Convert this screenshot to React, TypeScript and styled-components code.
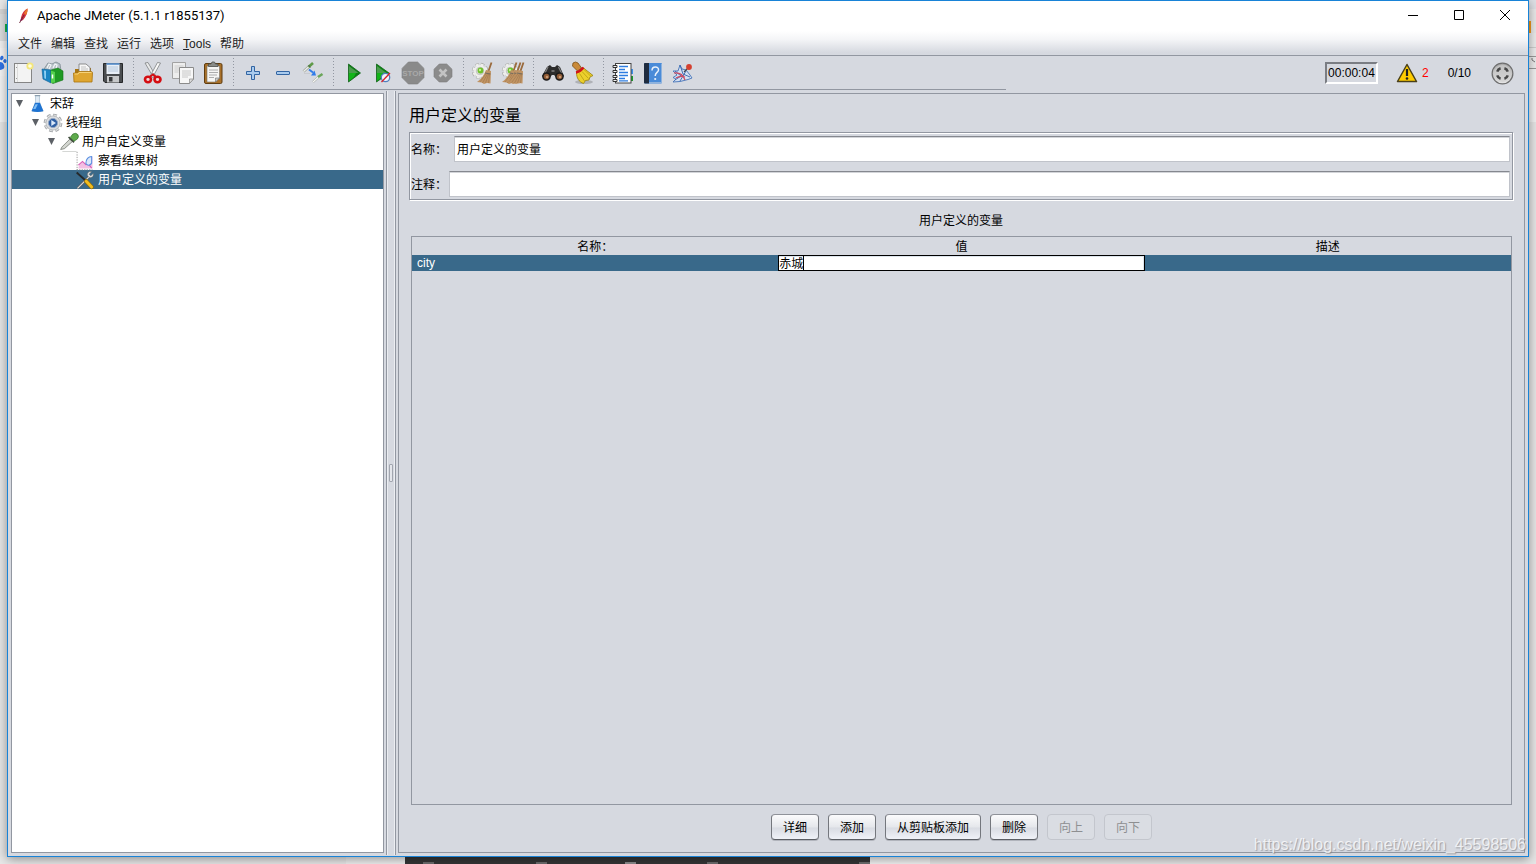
import React from "react";
import styled, { createGlobalStyle, css } from "styled-components";

const color = {
  face: "#d6d9e0",
  line: "#9297a1",
  select: "#39698a",
  accent: "#1883d7",
};

const GlobalStyle = createGlobalStyle`
  * { box-sizing: border-box; }
  body {
    margin: 0;
    background: #e6e6e6;
    color: #000;
    font: 12px/16px "Liberation Sans", "Noto Sans CJK SC", sans-serif;
  }
  button, input { font: inherit; color: inherit; }
`;

/* ---------- desktop behind the window ---------- */

const Desktop = styled.div`
  position: relative;
  display: grid;
  grid-template-columns: 7px minmax(0, 1fr) 7px;
  grid-template-rows: minmax(0, 1fr) 7px;
  height: 100vh;
  min-height: 400px;
  overflow: hidden;
`;

const Strip = styled.div`
  display: flex;
  flex-direction: column;
  overflow: hidden;
`;

const Band = styled.div<{ $h?: number; $bg: string }>`
  flex: ${(p) => (p.$h ? `0 0 ${p.$h}px` : "1")};
  display: flex;
  justify-content: flex-end;
  align-items: center;
  background: ${(p) => p.$bg};
`;

const Chip = styled.span<{ $w: number; $h: number; $bg: string; $before?: number }>`
  width: ${(p) => p.$w}px;
  height: ${(p) => p.$h}px;
  margin-left: ${(p) => p.$before ?? 0}px;
  background: ${(p) => p.$bg};
`;

const BottomStrip = styled.div`
  grid-column: 1 / -1;
  display: flex;
`;

const Slab = styled.div<{ $grow: number; $bg: string }>`
  flex: ${(p) => p.$grow} 1 0;
  display: flex;
  align-items: flex-end;
  min-width: 0;
  overflow: hidden;
  background: ${(p) => p.$bg};
`;

/* ---------- window ---------- */

const Window = styled.div`
  position: relative;
  z-index: 1;
  display: flex;
  flex-direction: column;
  min-width: 0;
  background: ${color.face};
  border: 1px solid ${color.accent};
  box-shadow: 0 2px 10px rgba(0, 0, 0, 0.4);
`;

const TitleBar = styled.header`
  display: flex;
  align-items: center;
  height: 30px;
  padding-left: 8px;
  background: #fff;
`;

const Title = styled.h1`
  flex: 1;
  margin: 0 0 0 5px;
  font: 13px/16px Roboto, "Noto Sans", sans-serif;
`;

const CaptionButton = styled.button`
  display: grid;
  place-items: center;
  width: 46px;
  height: 30px;
  padding: 0;
  border: 0;
  background: none;
`;

const MenuBar = styled.nav`
  display: flex;
  align-items: center;
  gap: 9px;
  height: 25px;
  padding-left: 10px;
  border-bottom: 1px solid ${color.line};
  background: linear-gradient(#fff, #f4f5f7 35%, #d6d9e0 90%);
`;

const MenuItem = styled.button`
  padding: 2px 0 0;
  border: 0;
  background: none;
  line-height: 16px;
  color: #222;
`;

const ToolRow = styled.div`
  display: flex;
  height: 34px;
`;

const Toolbar = styled.div`
  flex: 1;
  display: flex;
  border-bottom: 1px solid ${color.line};
`;

const ToolGroup = styled.div`
  display: flex;
  & + & {
    margin-left: 5px;
    padding-left: 5px;
    background: repeating-linear-gradient(${color.line} 0 1px, transparent 1px 3px) 0 2px / 1px 30px
      no-repeat;
  }
`;

const ToolButton = styled.button`
  display: grid;
  place-items: center;
  width: 30px;
  height: 33px;
  padding: 1px 0 0;
  border: 0;
  background: none;
`;

const Status = styled.div`
  flex: 0 0 522px;
  display: flex;
  align-items: center;
  justify-content: flex-end;
  padding-right: 14px;
`;

const Timer = styled.output`
  width: 53px;
  height: 22px;
  margin-right: 18px;
  border: 2px solid;
  border-color: #7a7d83 #fff #fff #7a7d83;
  line-height: 18px;
  text-align: center;
`;

const ErrorCount = styled.button`
  display: flex;
  align-items: center;
  gap: 4px;
  padding: 0;
  border: 0;
  background: none;
  color: #f00;
`;

const Threads = styled.span`
  margin: 0 20px 0 19px;
`;

/* ---------- split pane ---------- */

const Split = styled.main`
  flex: 1;
  display: flex;
  min-height: 0;
  padding: 0 3px;
`;

const TreePane = styled.ul`
  flex: 0 0 373px;
  margin: 3px 0;
  padding: 0;
  border: 1px solid ${color.line};
  background: #fff;
  list-style: none;
`;

const TreeRow = styled.li<{ $level: number; $selected?: boolean }>`
  display: flex;
  align-items: center;
  height: 19px;
  padding-left: ${(p) => 4 + p.$level * 16}px;
  ${(p) =>
    p.$selected &&
    css`
      background: ${color.select};
      color: #fff;
    `}
`;

const Arrow = styled.span<{ $open?: boolean }>`
  width: 7px;
  height: 7px;
  margin-right: 4px;
  ${(p) =>
    p.$open &&
    css`
      background: #5c6066;
      clip-path: polygon(0 0, 100% 0, 50% 100%);
    `}
`;

const TreeIcon = styled.span`
  display: grid;
  place-items: center;
  width: 20px;
  height: 19px;
  margin-right: 3px;
`;

const Divider = styled.div`
  flex: 0 0 10px;
  display: grid;
  place-items: center;
  margin: 1px 2px;
  border: solid ${color.line};
  border-width: 0 1px;
  box-shadow: inset 1px 0 #eceef2, inset -1px 0 #eceef2;
`;

const Grip = styled.span`
  width: 4px;
  height: 18px;
  border: 1px solid #a2a6af;
  border-radius: 1px;
  background: #e4e6eb;
`;

const Panel = styled.section`
  flex: 1;
  display: flex;
  flex-direction: column;
  min-width: 0;
  margin: 3px 0;
  padding: 12px 11px 12px 10px;
  border: 1px solid ${color.line};
`;

const PanelTitle = styled.h2`
  margin: 0 0 6px;
  font-size: 16px;
  font-weight: 400;
  line-height: 20px;
`;

const Fields = styled.div`
  display: flex;
  flex-direction: column;
  gap: 9px;
  padding: 3px 2px 2px 1px;
  border: 1px solid ${color.line};
  box-shadow: inset 1px 1px #fff, 1px 1px #fff;
`;

const Field = styled.div<{ $gap: number }>`
  display: flex;
  align-items: center;
  gap: ${(p) => p.$gap}px;
`;

const FieldLabel = styled.label`
  padding-top: 2px;
`;

const TextInput = styled.input`
  flex: 1;
  min-width: 0;
  height: 26px;
  padding: 0 2px 2px;
  border: 1px solid #c0c3ca;
  border-top-color: #85888f;
  border-radius: 0;
  background: #fff;
  box-shadow: inset 0 1px #d3d5d9;
  outline: 0;
`;

const TableTitle = styled.h3`
  margin: 13px 0 7px;
  font-size: 12px;
  font-weight: 400;
  line-height: 16px;
  text-align: center;
`;

const TableFrame = styled.div`
  flex: 1;
  min-height: 0;
  margin: 0 1px 0 2px;
  border: 1px solid ${color.line};
`;

const Table = styled.table`
  width: 100%;
  table-layout: fixed;
  border-collapse: collapse;
`;

const Th = styled.th`
  height: 18px;
  padding: 2px 0 0;
  font-weight: 400;
  line-height: 16px;
`;

const BodyRow = styled.tr`
  background: ${color.select};
  color: #fff;
`;

const Td = styled.td<{ $pad?: number }>`
  height: 16px;
  padding: 0 0 0 ${(p) => p.$pad ?? 0}px;
  line-height: 16px;
`;

const Editor = styled.div`
  position: relative;
  display: flex;
`;

const CellInput = styled.input`
  width: 100%;
  height: 16px;
  padding: 0 0 1px;
  border: 1px solid #000;
  border-radius: 0;
  background: #fff;
  box-shadow: inset -1px 1px #dde5ec;
  color: #000;
  line-height: 14px;
  outline: 0;
`;

const Caret = styled.span`
  position: absolute;
  top: 1px;
  left: 25px;
  width: 1px;
  height: 14px;
  background: #000;
`;

const Actions = styled.div`
  display: flex;
  justify-content: center;
  gap: 9px;
  margin-top: 9px;
  padding-left: 1px;
`;

const ActionButton = styled.button`
  height: 26px;
  padding: 2px 11px 0;
  border: 1px solid #74777d;
  border-color: #8f9299 #74777d #5b5e64;
  border-radius: 4px;
  background: linear-gradient(#fbfbfc, #e6e8ec 48%, #d9dce3 55%, #f0f2f8);
  box-shadow: 0 1px rgba(110, 113, 120, 0.35);
  line-height: 16px;
  &:disabled {
    border-color: #c3c6cd;
    background: #dadde3;
    box-shadow: none;
    color: #8e8f91;
  }
`;

const Watermark = styled.div`
  position: absolute;
  z-index: 2;
  right: 10px;
  bottom: 9px;
  font-size: 16px;
  line-height: 20px;
  color: rgba(255, 255, 255, 0.75);
  text-shadow: 1px 1px 1px rgba(120, 120, 125, 0.6);
  pointer-events: none;
`;

/* ---------- icons ---------- */

const Icon = ({ size = 24, children }: { size?: number; children: React.ReactNode }) => (
  <svg width={size} height={size} viewBox="0 0 24 24" fill="none" aria-hidden="true">
    {children}
  </svg>
);

const Octagon = ({ a, b, fill }: { a: number; b: number; fill: string }) => {
  const c = (b - a) * 0.29;
  return (
    <path
      fill={fill}
      stroke="#7e7e7e"
      strokeWidth=".6"
      d={`M${a + c} ${a}H${b - c}L${b} ${a + c}V${b - c}L${b - c} ${b}H${a + c}L${a} ${b - c}V${a + c}Z`}
    />
  );
};

const Gear = () => (
  <g>
    <circle cx="9" cy="10" r="6.500" stroke="#a4a6a3" strokeWidth="3.400" strokeDasharray="3.300 1.800" />
    <circle cx="9" cy="10" r="6.500" stroke="#efefed" strokeWidth="2.200" strokeDasharray="3 2.100" />
    <circle cx="9" cy="10" r="6" fill="#efefed" />
    <circle cx="9" cy="10" r="3.800" fill="#d5d8d0" stroke="#b9bcb6" strokeWidth=".7" />
    <circle cx="9.500" cy="9.500" r="2.900" fill="#6fc02c" />
    <circle cx="9" cy="9" r="1.200" fill="#c0f08c" />
  </g>
);

const Broom = ({ dx = 0 }: { dx?: number }) => (
  <g transform={`translate(${dx} 0)`}>
    <path d="M20.500 1.500 17.500 10" stroke="#9a6a3c" strokeWidth="1.800" />
    <path
      d="m15 9 5 1-.5 12.500-3.500-.5-3 1-2.500-1.500-4.500-.5C10.500 18 13 14 15 9Z"
      fill="#c09464"
    />
    <path
      d="m15.500 12-6.500 9M17 12l-5.500 10M17.800 12.500l-3.300 9.500M18.600 12.500 17.500 22"
      stroke="#a67c50"
      strokeWidth=".8"
    />
    <path d="m14 12 5.500 1" stroke="#6f6a60" strokeWidth=".9" />
  </g>
);

const icons: Record<string, React.ReactNode> = {
  new: (
    <>
      <rect x="3.500" y="2.500" width="17" height="19" fill="#f3f3f3" stroke="#858585" />
      <path d="M6.500 3v18" stroke="#dcdcdc" />
      <path d="M5 6.500h1M5 17.500h1" stroke="#999" />
      <circle cx="19" cy="5" r="3.600" fill="#f3e67c" />
      <circle cx="19" cy="5" r="1.800" fill="#fffde0" />
    </>
  ),
  templates: (
    <>
      <path d="m3 8 4-6 4 1 4-2 4 2 1 7-8 4Z" fill="#b9c2c8" stroke="#7e8a92" strokeWidth=".8" />
      <path d="m6 7 2-4 2 1-2 4m4-1 2-4 2 1-1 4" stroke="#f3f6f8" strokeWidth="1.200" />
      <path d="m1 8 9 1v13l-8-4Z" fill="#1b86c4" stroke="#0d5e93" strokeWidth=".6" />
      <path d="m3 9.500 2 .3V18l-1.600-.8Z" fill="#8fd0f3" />
      <path d="m10 9 7-2 5 3v9l-10 3.500-2-1Z" fill="#1f9a24" stroke="#157318" strokeWidth=".6" />
      <path d="m10 9.500 4 1.500v10.500l-4 .5Z" fill="#55cf4d" />
      <path d="M11.500 13.500v4" stroke="#fff" strokeWidth="1.500" />
    </>
  ),
  open: (
    <>
      <path d="M4 20V8h4l1-1h11v13Z" fill="#a97614" />
      <path d="M8 3h7l4 3.500V15H8Z" fill="#f7f7f7" stroke="#777" strokeWidth=".8" />
      <path d="M10 6h5M10 8h7M10 10h7" stroke="#b4b4b4" strokeWidth=".8" />
      <path d="M2.500 12h4l1-1.500h12.500q1.500 0 1.500 1.500L21 21H3Z" fill="#dfa631" stroke="#a8740f" strokeWidth=".8" />
      <path d="M3.500 13h3.500l1-1.500h12.500" stroke="#f6d37c" />
    </>
  ),
  save: (
    <>
      <path d="M2.500 2.500h19v19H4l-1.500-1.500Z" fill="#4a4d50" stroke="#26282a" />
      <rect x="5.500" y="2.500" width="13" height="10.500" fill="#e8eff7" />
      <path d="M5.500 3h13" stroke="#4a86c8" strokeWidth="1.500" />
      <path d="M7 6h10M7 8h10M7 10h10" stroke="#a9bfd6" strokeWidth=".8" />
      <rect x="6" y="15" width="12" height="6.500" fill="#c6c8ca" />
      <rect x="8" y="16" width="3.500" height="4.500" fill="#383a3c" />
    </>
  ),
  cut: (
    <>
      <path d="m4 2 3-.5 7.500 13-2 2Z" fill="#e9eaea" stroke="#7d8082" strokeWidth=".8" />
      <path d="m19.500 2-3-.5-7 13 2 2Z" fill="#f8f8f8" stroke="#7d8082" strokeWidth=".8" />
      <circle cx="12" cy="13" r=".8" fill="#555" />
      <ellipse cx="7" cy="18.500" rx="3" ry="2.700" fill="#f1dada" stroke="#d40d12" strokeWidth="2.600" />
      <ellipse cx="16.500" cy="18.500" rx="3" ry="2.700" fill="#f1dada" stroke="#d40d12" strokeWidth="2.600" />
      <path d="m9 15.500 3-2 2.500 2" stroke="#d40d12" strokeWidth="2" />
    </>
  ),
  copy: (
    <>
      <path d="M1.500 1.500h13v16h-13Z" fill="#ededed" stroke="#a2a2a2" />
      <path d="M3.500 5h9M3.500 7h9M3.500 9h9M3.500 11h4" stroke="#c5c5c5" strokeWidth=".8" />
      <path d="M8.500 6.500h14V18l-4 4.500h-10Z" fill="#f7f7f7" stroke="#8b8b8b" />
      <path d="M11 10h9M11 12h9M11 14h9M11 16h6" stroke="#bdbdbd" strokeWidth=".8" />
      <path d="M18.500 22.500V18h4Z" fill="#ddd" stroke="#8b8b8b" strokeWidth=".7" />
    </>
  ),
  paste: (
    <>
      <rect x="3.500" y="2.500" width="17.500" height="20" rx="1.500" fill="#a9712a" stroke="#5f3d10" />
      <path d="M6 5h12.500v12l-4 4H6Z" fill="#f6f6f4" stroke="#77726a" strokeWidth=".6" />
      <path d="M8 9h9M8 11.500h9M8 14h8M8 16.500h5" stroke="#a5a5a5" strokeWidth=".9" />
      <path d="M18.500 17h-4v4Z" fill="#cfcfcb" stroke="#6d6d6d" strokeWidth=".6" />
      <path d="M7.500 5.500V3h2.500l1-2h2.500l1 2H17v2.500Z" fill="#898b87" stroke="#4f514e" strokeWidth=".8" />
    </>
  ),
  add: (
    <path
      d="M10.500 5.500h3v5h5v3h-5v5h-3v-5h-5v-3h5Z"
      fill="#a9cbee"
      stroke="#3265a3"
      strokeLinejoin="round"
    />
  ),
  remove: <rect x="5.500" y="10.500" width="13" height="3" rx=".5" fill="#a9cbee" stroke="#3265a3" />,
  toggle: (
    <>
      <path d="m2.500 10.500 5.500-5" stroke="#9a9f96" strokeWidth="2.600" />
      <path d="m2.500 10.500 5.500-5" stroke="#eceeea" strokeWidth="1.400" />
      <path d="m7.500 6 4.500-4" stroke="#5f9a48" strokeWidth="2.600" />
      <path d="m7.500 4 2 2.500" stroke="#4c5548" strokeWidth=".8" />
      <path d="m8 8.500 4 3" stroke="#2f7bea" strokeWidth="1.800" />
      <path d="M15 14.500h-5l3.500-5Z" fill="#2f7bea" />
      <path d="m12 21 5.500-5" stroke="#9a9f96" strokeWidth="2.200" />
      <path d="m12 21 5.500-5" stroke="#f7f7f5" strokeWidth="1.300" />
      <path d="m17 16 4.500-3" stroke="#6ba65a" strokeWidth="2.400" />
      <path d="M3 12.500h6" stroke="#c4c7ca" strokeWidth=".8" />
    </>
  ),
  start: (
    <>
      <path d="M7.500 3v18l12-9Z" fill="#0a7d10" stroke="#11631a" strokeWidth=".8" />
      <path d="M8 5v7h9.500Z" fill="#4a9c4c" />
      <path d="M8 12v8l5-4 2-4Z" fill="#12b418" />
    </>
  ),
  startNoPause: (
    <>
      <path d="M5.500 3v18L18 12Z" fill="#0a8610" stroke="#11631a" strokeWidth=".8" />
      <path d="M6 5v7h9.500Z" fill="#4a9c4c" />
      <path d="M6 12v8l5-4 1-4Z" fill="#12b418" />
      <circle cx="14.500" cy="16.500" r="4.200" fill="#eef3fb" stroke="#4f7fbe" strokeWidth="1.300" />
      <path d="m10.500 21 8.500-9" stroke="#d9232b" strokeWidth="1.300" />
    </>
  ),
  stop: (
    <>
      <Octagon a={1} b={23} fill="#8a8a8a" />
      <text
        x="12"
        y="15"
        textAnchor="middle"
        fontFamily="Liberation Sans"
        fontWeight="700"
        fontSize="8"
        fill="#a9a9a9"
      >
        STOP
      </text>
    </>
  ),
  shutdown: (
    <>
      <Octagon a={3} b={21} fill="#8b8b8b" />
      <path d="m8.500 8.500 7 7m0-7-7 7" stroke="#c3c3c3" strokeWidth="2.600" />
    </>
  ),
  clear: (
    <>
      <Gear />
      <Broom />
    </>
  ),
  clearAll: (
    <>
      <Gear />
      <Broom dx={-5} />
      <Broom dx={-1} />
      <Broom dx={2} />
    </>
  ),
  search: (
    <>
      <path d="m6 6 3-2 2 2h3l2-2 3 2 4 9-5 4-5-5h-2l-5 5-5-4Z" fill="#2c2c2c" />
      <path d="M7 6 4 12M17.500 6l3 6" stroke="#808080" strokeWidth="1.200" />
      <circle cx="5.500" cy="15.500" r="4.300" fill="#1b1b1b" />
      <circle cx="18.500" cy="15.500" r="4.300" fill="#1b1b1b" />
      <circle cx="5.500" cy="15.500" r="2.800" fill="#8e5a35" />
      <circle cx="18.500" cy="15.500" r="2.800" fill="#8e5a35" />
      <circle cx="6" cy="16" r="1.300" fill="#c99a72" />
      <circle cx="19" cy="16" r="1.300" fill="#c99a72" />
      <path d="M10.500 10h3" stroke="#999" strokeWidth="1.200" />
    </>
  ),
  resetSearch: (
    <>
      <ellipse cx="13" cy="21" rx="9" ry="2" fill="#000" opacity=".18" />
      <path
        d="m1.500 5 .5-3 2.500-1 2.500 1 3.500 5L6.500 10Z"
        fill="#c98a3a"
        stroke="#7c4f14"
        strokeWidth=".8"
      />
      <path
        d="m5.500 11.500 7-4.500 9.500 7.500-3 1.500-1 3-3.500.500-2 3C8 21 5.500 17 5.500 11.500Z"
        fill="#ecd02c"
        stroke="#97800b"
        strokeWidth=".8"
      />
      <path d="m8.500 12.500 5 7.500m-2.500-9.500 6.500 7m-4-8.500 6 6" stroke="#b99d12" strokeWidth=".8" />
      <path d="M5 11.500c3-.5 5.500-2.500 7.500-5" stroke="#d3141a" strokeWidth="2.600" />
    </>
  ),
  functions: (
    <>
      <path d="M19 8h3v5h-3Z" fill="#3c8fe8" />
      <path d="M19 15h3v5h-3Z" fill="#1c9a2a" />
      <rect x="4.500" y="2.500" width="15.500" height="19.500" fill="#fff" stroke="#444" />
      <path d="M8 5.500h9M8 8.500h6M8 11.500h9M8 14.500h9M8 17.500h6M8 19.800h9" stroke="#2f7de0" strokeWidth="1.300" />
      <path d="M2 4.500h4v2H2ZM2 9.500h4v2H2ZM2 14.500h4v2H2ZM2 18.500h4v2H2Z" fill="#f4f4f4" stroke="#222" strokeWidth=".9" />
    </>
  ),
  help: (
    <>
      <rect x="3" y="2" width="18" height="20.500" rx="1" fill="#4a8bd8" />
      <path d="M3 3q0-1 1-1h4v20.500H4q-1 0-1-1Z" fill="#1f2c40" />
      <path d="M20.500 3v19M8 21.500h12.500" stroke="#8fb3de" />
      <path
        d="M11 9.500c0-4.500 7-4.500 6.500-.5-.300 2.500-3.300 2.500-3.300 6"
        stroke="#e9f1fb"
        strokeWidth="1.500"
      />
      <circle cx="14.200" cy="18" r="1.100" fill="#e9f1fb" />
    </>
  ),
  whatsThis: (
    <>
      <path
        d="m9 4 2 4 4 1 4 5 2 3-4 1.500-8 2-7 .5 3-3-3-1.500 4-2.500-4-4h5Z"
        fill="#d3dff1"
        stroke="#4473b8"
        strokeWidth=".9"
      />
      <path d="m4 10 6 5-6 4m5-15 3 9 7 3M9 20l6-10" stroke="#3864ad" strokeWidth=".9" />
      <path d="M3 12c5-.5 9 1 11 7M5 17c3-2 6-2 9-1" stroke="#cb4a62" strokeWidth="1.200" />
      <path d="m13 11 4-4" stroke="#444" strokeWidth="1.100" />
      <circle cx="18" cy="6" r="2.900" fill="#d4402f" />
    </>
  ),
};

const toolGroups: [string, string][][] = [
  [["new", "新建"], ["templates", "模板"], ["open", "打开"], ["save", "保存"]],
  [["cut", "剪切"], ["copy", "复制"], ["paste", "粘贴"]],
  [["add", "展开"], ["remove", "收起"], ["toggle", "切换"]],
  [["start", "启动"], ["startNoPause", "不停顿开始"], ["stop", "停止"], ["shutdown", "关闭"]],
  [["clear", "清除"], ["clearAll", "清除全部"]],
  [["search", "查找"], ["resetSearch", "重置搜索"]],
  [["functions", "函数助手"], ["help", "帮助"], ["whatsThis", "这是什么"]],
];

const treeIcons: Record<string, React.ReactNode> = {
  flask: (
    <Icon size={19}>
      <path d="M9.500 2h5v8l4.500 12H5L9.500 10Z" fill="#dfeaf4" stroke="#9db4c8" strokeWidth=".8" />
      <path d="M9 11h6l4.500 10.500q-7.500 2.500-15 0Z" fill="#1e73d2" />
      <path d="M9.500 13h3l-3 6H6.500Z" fill="#7fbdf4" />
      <path d="M8.500 2h7" stroke="#8b9dad" strokeWidth="1.500" />
    </Icon>
  ),
  threads: (
    <Icon size={20}>
      <circle cx="12" cy="12" r="9.300" stroke="#9a9da1" strokeWidth="3.800" strokeDasharray="4.300 3" />
      <circle cx="12" cy="12" r="9.200" stroke="#dfe1e2" strokeWidth="2.200" strokeDasharray="3.800 3.500" />
      <circle cx="12" cy="12" r="8.500" fill="#dcdee0" stroke="#a6a9ac" strokeWidth=".8" />
      <circle cx="12" cy="12" r="5.500" fill="#2f5fa4" stroke="#93a6c2" strokeWidth="1.200" />
      <path d="M10 8.500v7l5.500-3.500Z" fill="#dbe9fa" />
    </Icon>
  ),
  dropper: (
    <Icon size={20}>
      <path d="M4 23.500h17" stroke="#c9cbc8" />
      <path d="m2 21 1.500-3L13 8.500l3 3L6.500 20Z" fill="#d3d6d0" stroke="#70756d" strokeWidth=".9" />
      <path d="m11.500 6 6.500 6.500" stroke="#3f4a3c" strokeWidth="2" />
      <path d="m13.500 6.500 3-4q4-2 6 .5T22 8.500l-4 2.500Z" fill="#5fab4c" stroke="#2d6b25" strokeWidth=".8" />
    </Icon>
  ),
  chart: (
    <Icon size={20}>
      <path d="M2.500 1v22M2 22.500h19" stroke="#8a8a8a" strokeDasharray="1.500 1.500" />
      <path d="m4 21 1-5 4-3 4 2 4-6 4-2v14Z" fill="#f3bfe3" />
      <path d="m4 17 5-4.500 4 4 3-1 4 5" stroke="#d85fb5" strokeWidth="1.300" />
      <path d="M13 15c0-5 3-8.500 7-8.500v8c-2 3-5 3.500-7 .5Z" fill="#dbe8fb" stroke="#5b8fe0" strokeWidth="1.300" />
    </Icon>
  ),
  tools: (
    <Icon size={20}>
      <path d="m3 22 15-15" stroke="#55585a" strokeWidth="3" />
      <path d="m3 22 15-15" stroke="#d8dbdc" strokeWidth="1.400" />
      <path d="M15 7c-1-4 2-6 5-5l-3 3 2 2 3-3c1 4-2 6-5 5Z" fill="#d8dbdc" stroke="#55585a" strokeWidth=".6" />
      <path d="m2 3 10 9" stroke="#26282a" strokeWidth="2.200" />
      <path d="m13.500 13.500 6.500 7" stroke="#8f6a07" strokeWidth="5" strokeLinecap="round" />
      <path d="m13.500 13.500 6.500 7" stroke="#f1bd1f" strokeWidth="3.400" strokeLinecap="round" />
    </Icon>
  ),
};

const tree = [
  { level: 0, icon: "flask", label: "宋辞", open: true },
  { level: 1, icon: "threads", label: "线程组", open: true },
  { level: 2, icon: "dropper", label: "用户自定义变量", open: true },
  { level: 3, icon: "chart", label: "察看结果树" },
  { level: 3, icon: "tools", label: "用户定义的变量", selected: true },
];

const actions = [
  { label: "详细" },
  { label: "添加" },
  { label: "从剪贴板添加" },
  { label: "删除" },
  { label: "向上", disabled: true },
  { label: "向下", disabled: true },
];

const Feather = () => (
  <svg width="16" height="16" viewBox="0 0 16 16" aria-hidden="true">
    <path d="M5 9.500C6 5 8 2 11.500.500 12 4 10 8.500 7 12L4.500 13Z" fill="#d22f3d" />
    <path d="M8 5.500C9 3 10 1.500 11.500.500 11.800 3 11 5 10 7Z" fill="#e8762c" />
    <path d="M5.500 9.500 4 13 6.500 12Z" fill="#7a2a7d" />
    <path d="M8 7 3.500 15" stroke="#6b2236" strokeWidth=".9" />
  </svg>
);

const Warning = () => (
  <svg width="22" height="20" viewBox="0 0 22 20" aria-hidden="true">
    <path d="M11 1.500 20.500 18.500H1.500Z" fill="#fc0" stroke="#4a4018" strokeWidth="1.500" strokeLinejoin="round" />
    <path d="M11 6v7" stroke="#222" strokeWidth="2.200" />
    <circle cx="11" cy="15.500" r="1.300" fill="#222" />
  </svg>
);

const Remote = () => (
  <svg width="23" height="23" viewBox="0 0 24 24" fill="none" aria-hidden="true">
    <defs>
      <linearGradient id="steel" x2="0" y2="1">
        <stop stopColor="#a9a9a9" />
        <stop offset="1" stopColor="#e6e6e6" />
      </linearGradient>
    </defs>
    <circle cx="12" cy="12" r="10.800" fill="url(#steel)" stroke="#6e6e6e" strokeWidth="1.300" />
    <circle cx="12" cy="12" r="8.800" fill="#cfcfcf" opacity=".6" />
    <path
      d="M6.500 10q.8-2.700 3.500-3.500M14 6.500q2.700.8 3.500 3.500M17.500 14q-.8 2.700-3.500 3.500M10 17.500q-2.700-.8-3.500-3.500"
      stroke="#484848"
      strokeWidth="2.600"
    />
  </svg>
);

const Caption = ({ d, label }: { d: string; label: string }) => (
  <CaptionButton aria-label={label}>
    <svg width="12" height="12" viewBox="0 0 12 12" fill="none" stroke="#000" aria-hidden="true">
      <path d={d} />
    </svg>
  </CaptionButton>
);

export default function App() {
  return (
    <>
      <GlobalStyle />
      <Desktop>
        <Strip>
          <Band $h={9} $bg="#e9e9e9" />
          <Band $h={5} $bg="#d6d6d6" />
          <Band $h={27} $bg="#dcdedf">
            <Chip $w={2} $h={8} $bg="#12b34a" />
          </Band>
          <Band $h={7} $bg="#f2f2f2" />
          <Band $h={28} $bg="#f6f6f6">
            <svg width="7" height="16" viewBox="0 0 7 16" aria-hidden="true">
              <path
                d="M0 8q3 0 4 3t-1 4-3 1ZM1 2q2-1 2.500 1T2 6 0 4ZM4.500 5q2.500 0 2 2.500T4 8.500 4.500 5Z"
                fill="#2f73e6"
              />
            </svg>
          </Band>
          <Band $h={46} $bg="#f4f4f4" />
          <Band $bg="#e6e6e6" />
        </Strip>

        <Window>
          <TitleBar>
            <Feather />
            <Title>Apache JMeter (5.1.1 r1855137)</Title>
            <Caption label="最小化" d="M1 5.500h10" />
            <Caption label="最大化" d="M1.500.500h9v9h-9Z" />
            <Caption label="关闭窗口" d="m1 0 10 10M11 0 1 10" />
          </TitleBar>

          <MenuBar>
            <MenuItem>文件</MenuItem>
            <MenuItem>编辑</MenuItem>
            <MenuItem>查找</MenuItem>
            <MenuItem>运行</MenuItem>
            <MenuItem>选项</MenuItem>
            <MenuItem>
              <u>T</u>ools
            </MenuItem>
            <MenuItem>帮助</MenuItem>
          </MenuBar>

          <ToolRow>
            <Toolbar>
              {toolGroups.map((group) => (
                <ToolGroup key={group[0][0]}>
                  {group.map(([name, label]) => (
                    <ToolButton key={name} aria-label={label}>
                      <Icon>{icons[name]}</Icon>
                    </ToolButton>
                  ))}
                </ToolGroup>
              ))}
            </Toolbar>
            <Status>
              <Timer>00:00:04</Timer>
              <ErrorCount>
                <Warning />2
              </ErrorCount>
              <Threads>0/10</Threads>
              <Remote />
            </Status>
          </ToolRow>

          <Split>
            <TreePane>
              {tree.map((node) => (
                <TreeRow key={node.label} $level={node.level} $selected={node.selected}>
                  <Arrow $open={node.open} />
                  <TreeIcon>{treeIcons[node.icon]}</TreeIcon>
                  {node.label}
                </TreeRow>
              ))}
            </TreePane>

            <Divider>
              <Grip />
            </Divider>

            <Panel>
              <PanelTitle>用户定义的变量</PanelTitle>
              <Fields>
                <Field $gap={7}>
                  <FieldLabel htmlFor="name">名称：</FieldLabel>
                  <TextInput id="name" defaultValue="用户定义的变量" />
                </Field>
                <Field $gap={2}>
                  <FieldLabel htmlFor="comment">注释：</FieldLabel>
                  <TextInput id="comment" />
                </Field>
              </Fields>

              <TableTitle>用户定义的变量</TableTitle>
              <TableFrame>
                <Table>
                  <thead>
                    <tr>
                      <Th>名称：</Th>
                      <Th>值</Th>
                      <Th>描述</Th>
                    </tr>
                  </thead>
                  <tbody>
                    <BodyRow>
                      <Td $pad={5}>city</Td>
                      <Td>
                        <Editor>
                          <CellInput aria-label="值" defaultValue="赤城" />
                          <Caret />
                        </Editor>
                      </Td>
                      <Td />
                    </BodyRow>
                  </tbody>
                </Table>
              </TableFrame>

              <Actions>
                {actions.map((a) => (
                  <ActionButton key={a.label} disabled={a.disabled}>
                    {a.label}
                  </ActionButton>
                ))}
              </Actions>
            </Panel>
          </Split>
        </Window>

        <Strip>
          <Band $h={9} $bg="#dfe1e6" />
          <Band $h={12} $bg="#e9e9e9" />
          <Band $h={12} $bg="#e9e9e9">
            <Chip $w={7} $h={12} $bg="linear-gradient(90deg, #f39a1d 0 2px, transparent 2px)" />
          </Band>
          <Band $h={14} $bg="#ececec" />
          <Band $h={1} $bg="#cfcfcf" />
          <Band $h={8} $bg="#ededed" />
          <Band $h={1} $bg="#999" />
          <Band $h={11} $bg="#ededed">
            <svg width="7" height="11" viewBox="0 0 7 11" fill="none" stroke="#777" aria-hidden="true">
              <path d="M3 1v2l3 2" />
            </svg>
          </Band>
          <Band $h={1} $bg="#999" />
          <Band $h={53} $bg="#f2f2f2" />
          <Band $bg="#e6e6e6" />
        </Strip>

        <BottomStrip>
          <Slab $grow={346} $bg="#e8e8e8" />
          <Slab $grow={59} $bg="#efefef" />
          <Slab $grow={465} $bg="#353637">
            <Chip $w={11} $h={2} $bg="#6c6d6e" $before={18} />
            <Chip $w={11} $h={2} $bg="#6c6d6e" $before={102} />
            <Chip $w={11} $h={2} $bg="#8c8d8e" $before={78} />
            <Chip $w={11} $h={2} $bg="#6c6d6e" $before={71} />
            <Chip $w={11} $h={2} $bg="#6c6d6e" $before={141} />
          </Slab>
          <Slab $grow={60} $bg="#f2f2f2" />
          <Slab $grow={606} $bg="#e6e6e6" />
        </BottomStrip>

        <Watermark>https://blog.csdn.net/weixin_45598506</Watermark>
      </Desktop>
    </>
  );
}
